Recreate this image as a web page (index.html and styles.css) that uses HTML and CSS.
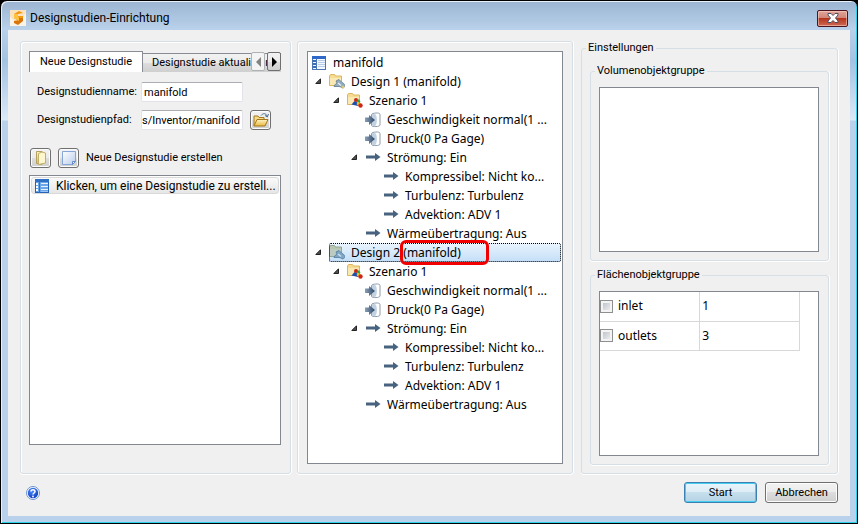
FILE: index.html
```
<!DOCTYPE html>
<html lang="de">
<head>
    <meta charset="UTF-8">
    <title>Designstudien-Einrichtung</title>
    <link rel="stylesheet" href="styles.css">
</head>
<body>
<svg class="defs" aria-hidden="true">
    <defs>
        <linearGradient id="gold" x1="0" y1="0" x2="0" y2="1">
            <stop offset="0" stop-color="#fdf3c4"/>
            <stop offset="1" stop-color="#e9b93f"/>
        </linearGradient>
        <linearGradient id="steel" x1="0" y1="0" x2="1" y2="0">
            <stop offset="0" stop-color="#8aa0b8"/>
            <stop offset="1" stop-color="#2d4766"/>
        </linearGradient>
        <linearGradient id="paper" x1="0" y1="0" x2="1" y2="1">
            <stop offset="0" stop-color="#fff"/>
            <stop offset="1" stop-color="#b9cdec"/>
        </linearGradient>
        <radialGradient id="ball" cx=".4" cy=".3" r=".8">
            <stop offset="0" stop-color="#4c8bff"/>
            <stop offset="1" stop-color="#0836b8"/>
        </radialGradient>
    </defs>
    <symbol id="toggle" viewBox="0 0 6 6">
        <path d="M5.500 .8v4.700H.8z" fill="#505050" stroke="#222"/>
    </symbol>
    <symbol id="study" viewBox="0 0 16 16">
        <rect x="1.500" y="1.500" width="13" height="13" fill="#f4f8ff" stroke="#4a75b5"/>
        <path d="M1 1h14v3H1z" fill="#2f68c8"/>
        <path d="M2 5h3v2H2zM2 8h3v2H2zM2 11h3v2H2z" fill="#3c6eb8"/>
        <path d="M5.500 4v11" stroke="#4a75b5"/>
        <path d="M7 5.500h7M7 7.500h7M7 9.500h7M7 11.500h7" stroke="#b8cbe6"/>
    </symbol>
    <symbol id="study-blue" viewBox="0 0 16 16">
        <rect x="1.500" y="1.500" width="13" height="13" fill="#6aa6e8" stroke="#2463b5"/>
        <path d="M1 1h14v3H1zM5 4h1v11H5z" fill="#2f6fc4"/>
        <path d="M2 5h2v2H2zM2 8h2v2H2zM2 11h2v2H2z" fill="#fff"/>
        <path d="M7 5.500h7M7 8.500h7M7 11.500h7" stroke="#e8f2ff"/>
        <path d="M7 13.500h7" stroke="#9cc3f2"/>
    </symbol>
    <symbol id="design" viewBox="0 0 16 16">
        <path d="M.5 2L1.500.5h4l1 1.500h6v9.500H.5z" fill="#f6dc92" stroke="#deb55e"/>
        <path d="M1 4h11v7H1z" fill="#fbe9b4"/>
        <path d="M5 12.500c0-2 2-2 3-3.500l-1-2 3-1.500 3 3c2 .5 3 2.500 2.500 4-1 2-2.500 1.500-3.500.5l-2-.5z" fill="#93adc0" stroke="#60798e" stroke-width=".8"/>
        <path d="M9 9l3 2.500" stroke="#e3edf3" stroke-width="1.500"/>
        <circle cx="14" cy="13" r="1.500" fill="#d9c877"/>
    </symbol>
    <symbol id="design-sel" viewBox="0 0 16 16">
        <path d="M.5 2L1.500.5h4l1 1.500h6v9.500H.5z" fill="#b9c6ae" stroke="#94a698"/>
        <path d="M1 4h11v7H1z" fill="#bccbc2"/>
        <path d="M5 12.500c0-2 2-2 3-3.500l-1-2 3-1.500 3 3c2 .5 3 2.500 2.500 4-1 2-2.500 1.500-3.500.5l-2-.5z" fill="#7fa6c5" stroke="#4f7ba0" stroke-width=".8"/>
        <path d="M9 9l3 2.500" stroke="#c9def0" stroke-width="1.500"/>
    </symbol>
    <symbol id="scenario" viewBox="0 0 16 16">
        <path d="M.5 2L1.500.5h4l1 1.500h6v9.500H.5z" fill="#f6dc92" stroke="#deb55e"/>
        <path d="M1 4h11v7H1z" fill="#fbe9b4"/>
        <path d="M4.500 11.500L7.500 8l3 1.500.5 3.500z" fill="#1b4fae"/>
        <path d="M10 8l2-2 1.500 3-2 1.500z" fill="#36a13c"/>
        <path d="M9.500 11l2-2 2.500 2-1.500 2.500z" fill="#f2cd1c"/>
        <circle cx="9" cy="7" r="2" fill="#c9281c"/>
        <circle cx="13.500" cy="12.500" r="2.200" fill="#cf2418"/>
    </symbol>
    <symbol id="inflow" viewBox="0 0 16 16">
        <path d="M6.500 2.500C7 1 15 0 15 2.500v10.500c0 2-8 2-8.500.5z" fill="#fff" stroke="#8d9cab"/>
        <path d="M10 2c2.500 1 2.500 11 0 12H7V2z" fill="#c3d2e2"/>
        <path d="M0 5.500h4V3l6 5-6 5v-3H0z" fill="url(#steel)"/>
    </symbol>
    <symbol id="arrow" viewBox="0 0 16 16">
        <path d="M1 5.500h9V3l5.500 4L10 11V8.500H1z" fill="#48637f"/>
    </symbol>
</svg>

<div class="window">
    <header class="titlebar">
        <svg class="app-icon" viewBox="0 0 16 16">
            <rect width="16" height="16" fill="#f9e2bd"/>
            <path d="M0 16V7l5 4 6-1 5-7v13z" fill="#fbf3e6"/>
            <path d="M13 3L9 1 4 4v4l5 3V8h4V6H8V4z" fill="#f5960f"/>
            <path d="M9 8h4v3l-5 4-4-2v-2l5-1z" fill="#d9740a"/>
            <path d="M4 4l4 0v2l1 2v3L4 8z" fill="#fdc23e"/>
        </svg>
        <h1 class="title">Designstudien-Einrichtung</h1>
        <button class="close" type="button" aria-label="Schließen">
            <svg viewBox="0 0 12 10"><path d="M1 .5h3l2 2 2-2h3v1.500L8.500 5 11 8v1.500H8l-2-2-2 2H1V8l2.500-3L1 2z" fill="#fff" stroke="#4a4f63"/></svg>
        </button>
    </header>

    <main class="client">
        <div class="panels">
            <section class="panel panel-study">
                <div class="tabs" role="tablist">
                    <button class="tab active" type="button" role="tab" aria-selected="true">Neue Designstudie</button>
                    <button class="tab" type="button" role="tab" aria-selected="false">Designstudie aktualisieren</button>
                    <div class="tab-scroll">
                        <button type="button" disabled aria-label="Zurück"><svg viewBox="0 0 5 10"><path d="M5 0v10L0 5z"/></svg></button>
                        <button type="button" aria-label="Weiter"><svg viewBox="0 0 5 10"><path d="M0 0v10l5-5z"/></svg></button>
                    </div>
                </div>
                <div class="form">
                    <label for="name">Designstudienname:</label>
                    <input id="name" type="text" value="manifold">
                    <label for="path">Designstudienpfad:</label>
                    <input id="path" class="path" type="text" value="s/Inventor/manifold">
                    <button class="tool" type="button" aria-label="Durchsuchen">
                        <svg viewBox="0 0 16 16">
                            <path d="M1 14V4h4l1 1.500h5V8" fill="#f5dc86" stroke="#a5781d"/>
                            <path d="M1 14l3-6.500h11L12 14z" fill="url(#gold)" stroke="#a5781d"/>
                            <path d="M8 3.500c2-2.500 5-2.500 6 .5M12 3.500l2.300 1.500L15.500 2" fill="none" stroke="#4c7098"/>
                        </svg>
                    </button>
                </div>
                <div class="create">
                    <button class="tool" type="button" aria-label="Neu">
                        <svg viewBox="0 0 16 16">
                            <path d="M3.500 1.500H9v13l-5.500-1z" fill="url(#gold)" stroke="#b3a15c"/>
                            <path d="M5.500 3.500L9 2l3.500 1v10l-7 1.500z" fill="#fdf6cf" stroke="#c2b06a"/>
                        </svg>
                    </button>
                    <button class="tool" type="button" aria-label="Kopieren">
                        <svg viewBox="0 0 16 16">
                            <path d="M1.500 1.500h13v10l-3 3h-10z" fill="url(#paper)" stroke="#86a5d8"/>
                            <path d="M14.500 11.500h-3v3z" fill="#fff" stroke="#6389c9"/>
                        </svg>
                    </button>
                    <span>Neue Designstudie erstellen</span>
                </div>
                <ul class="box study-list">
                    <li><svg class="icon"><use href="#study-blue"/></svg>Klicken, um eine Designstudie zu erstell...</li>
                </ul>
            </section>

            <section class="panel panel-tree">
                <div class="box tree">
                    <div class="row"><span class="item"><svg class="icon"><use href="#study"/></svg>manifold</span></div>
                    <ul>
                        <li>
                            <div class="row"><svg class="toggle"><use href="#toggle"/></svg><span class="item"><svg class="icon"><use href="#design"/></svg>Design 1 (manifold)</span></div>
                            <ul>
                                <li>
                                    <div class="row"><svg class="toggle"><use href="#toggle"/></svg><span class="item"><svg class="icon"><use href="#scenario"/></svg>Szenario 1</span></div>
                                    <ul>
                                        <li class="row leaf"><span class="item"><svg class="icon"><use href="#inflow"/></svg>Geschwindigkeit normal(1 ...</span></li>
                                        <li class="row leaf"><span class="item"><svg class="icon"><use href="#inflow"/></svg>Druck(0 Pa Gage)</span></li>
                                        <li>
                                            <div class="row"><svg class="toggle"><use href="#toggle"/></svg><span class="item"><svg class="icon"><use href="#arrow"/></svg>Strömung: Ein</span></div>
                                            <ul>
                                                <li class="row leaf"><span class="item"><svg class="icon"><use href="#arrow"/></svg>Kompressibel: Nicht ko...</span></li>
                                                <li class="row leaf"><span class="item"><svg class="icon"><use href="#arrow"/></svg>Turbulenz: Turbulenz</span></li>
                                                <li class="row leaf"><span class="item"><svg class="icon"><use href="#arrow"/></svg>Advektion: ADV 1</span></li>
                                            </ul>
                                        </li>
                                        <li class="row leaf"><span class="item"><svg class="icon"><use href="#arrow"/></svg>Wärmeübertragung: Aus</span></li>
                                    </ul>
                                </li>
                            </ul>
                        </li>
                        <li>
                            <div class="row"><svg class="toggle"><use href="#toggle"/></svg><span class="item selected"><svg class="icon"><use href="#design-sel"/></svg><span>Design 2 <span class="marked">(manifold)</span></span></span></div>
                            <ul>
                                <li>
                                    <div class="row"><svg class="toggle"><use href="#toggle"/></svg><span class="item"><svg class="icon"><use href="#scenario"/></svg>Szenario 1</span></div>
                                    <ul>
                                        <li class="row leaf"><span class="item"><svg class="icon"><use href="#inflow"/></svg>Geschwindigkeit normal(1 ...</span></li>
                                        <li class="row leaf"><span class="item"><svg class="icon"><use href="#inflow"/></svg>Druck(0 Pa Gage)</span></li>
                                        <li>
                                            <div class="row"><svg class="toggle"><use href="#toggle"/></svg><span class="item"><svg class="icon"><use href="#arrow"/></svg>Strömung: Ein</span></div>
                                            <ul>
                                                <li class="row leaf"><span class="item"><svg class="icon"><use href="#arrow"/></svg>Kompressibel: Nicht ko...</span></li>
                                                <li class="row leaf"><span class="item"><svg class="icon"><use href="#arrow"/></svg>Turbulenz: Turbulenz</span></li>
                                                <li class="row leaf"><span class="item"><svg class="icon"><use href="#arrow"/></svg>Advektion: ADV 1</span></li>
                                            </ul>
                                        </li>
                                        <li class="row leaf"><span class="item"><svg class="icon"><use href="#arrow"/></svg>Wärmeübertragung: Aus</span></li>
                                    </ul>
                                </li>
                            </ul>
                        </li>
                    </ul>
                </div>
            </section>

            <fieldset class="panel panel-settings">
                <legend>Einstellungen</legend>
                <fieldset class="panel group">
                    <legend>Volumenobjektgruppe</legend>
                    <div class="box"></div>
                </fieldset>
                <fieldset class="panel group">
                    <legend>Flächenobjektgruppe</legend>
                    <div class="box">
                        <table class="faces">
                            <tr>
                                <td><label><input type="checkbox">inlet</label></td>
                                <td>1</td>
                            </tr>
                            <tr>
                                <td><label><input type="checkbox">outlets</label></td>
                                <td>3</td>
                            </tr>
                        </table>
                    </div>
                </fieldset>
            </fieldset>
        </div>

        <footer class="footer">
            <button class="help" type="button" aria-label="Hilfe">
                <svg viewBox="0 0 14 14">
                    <circle cx="7" cy="7" r="6.500" fill="#fff" stroke="#6b93cf"/>
                    <circle cx="7" cy="7" r="5.200" fill="url(#ball)"/>
                    <path d="M5 5.500c0-2.500 4-2.500 4 0C9 7 7 7 7 8.500" fill="none" stroke="#fff" stroke-width="1.500"/>
                    <circle cx="7" cy="10.500" r=".9" fill="#fff"/>
                </svg>
            </button>
            <button class="btn default" type="button">Start</button>
            <button class="btn" type="button">Abbrechen</button>
        </footer>
    </main>
</div>
</body>
</html>
```
FILE: styles.css
```
* {
    box-sizing: border-box;
}

body {
    margin: 0;
    background: #000;
    color: #000;
    font: 11px/14px Roboto, "Liberation Sans", sans-serif;
}

button, input {
    margin: 0;
    padding: 0;
    color: inherit;
    font: inherit;
}

ul {
    margin: 0;
    padding: 0;
    list-style: none;
}

.defs {
    position: absolute;
    width: 0;
    height: 0;
}

/* window frame */
.window {
    display: flex;
    flex-direction: column;
    min-height: 100vh;
    padding: 0 6px 7px;
    border: 1px solid #000;
    border-radius: 7px 7px 0 0;
    background: linear-gradient(#9ab4d1, #b9d1ea 28px, #a3c2e2 60px, #dce9f7 119px, #b9d1ea 120px);
    box-shadow: inset 1px 1px #e8f1fa, inset -1px -1px #2cd3ea;
}

.titlebar {
    display: flex;
    align-items: center;
    height: 29px;
    padding: 5px 3px 0;
}

.app-icon {
    width: 16px;
    height: 16px;
}

.title {
    flex: 1;
    margin: 0 0 0 4px;
    font-size: 12px;
    font-weight: normal;
}

.close {
    display: flex;
    align-items: center;
    justify-content: center;
    width: 31px;
    height: 17px;
    border: 1px solid #4a1420;
    border-radius: 2px;
    background: linear-gradient(#e2a498, #d08376 50%, #b5351c 50%, #cf6a55);
    box-shadow: inset 0 0 0 1px rgba(255, 220, 210, .5);
}

.close svg {
    width: 12px;
    height: 10px;
}

.client {
    display: flex;
    flex: 1;
    flex-direction: column;
    margin: 0 1px;
    padding: 11px 12px 13px;
    background: #f0f0f0;
}

/* three columns */
.panels {
    display: grid;
    flex: 1;
    grid-template-columns: 271fr 276fr 259fr;
    gap: 6px;
}

.panel {
    display: flex;
    flex-direction: column;
    min-width: 0;
    margin: 0;
    padding: 9px 9px 8px 8px;
    border: 1px solid #d5dfe5;
    border-radius: 3px;
    box-shadow: inset 1px 1px #fff, 0 1px #fff, 1px 0 #fff;
}

.box {
    flex: 1;
    border: 1px solid #828790;
    background: #fff;
}

/* left column */
.panel-study {
    padding-bottom: 28px;
}

.tabs {
    position: relative;
    display: flex;
    align-items: flex-end;
    height: 21px;
    overflow: hidden;
}

.tab {
    flex: none;
    height: 19px;
    padding: 0 9px;
    border: 1px solid #898c95;
    border-left: 0;
    border-bottom: 0;
    background: linear-gradient(#f2f2f2, #ebebeb 50%, #ddd 50%, #cfcfcf);
}

.tab.active {
    height: 21px;
    padding: 0 10px;
    border-left: 1px solid #898c95;
    background: #fff;
}

.tab-scroll {
    position: absolute;
    right: 0;
    bottom: 1px;
    display: flex;
    gap: 2px;
}

.tab-scroll button {
    display: flex;
    align-items: center;
    justify-content: center;
    width: 14px;
    height: 19px;
    border: 1px solid #707070;
    border-radius: 2px;
    background: linear-gradient(#f2f2f2, #ebebeb 50%, #ddd 50%, #cfcfcf);
}

.tab-scroll button:disabled {
    border-color: #adb2b5;
    background: #f4f4f4;
    fill: #838383;
}

.tab-scroll svg {
    width: 5px;
    height: 10px;
}

.form {
    display: grid;
    grid-template-columns: 97px 102px 21px;
    grid-auto-rows: 20px;
    gap: 8px 7px;
    align-items: center;
    padding: 10px 8px 0;
}

.form input {
    width: 100%;
    height: 20px;
    padding: 0 2px;
    border: 1px solid #e2e3ea;
    border-top-color: #abadb3;
    border-radius: 2px;
    background: #fff;
}

.form .path {
    padding: 0;
}

.form label {
    grid-column: 1;
}

.tool {
    display: flex;
    align-items: center;
    justify-content: center;
    width: 21px;
    height: 20px;
    border: 1px solid #707070;
    border-radius: 3px;
    background: linear-gradient(#f2f2f2, #ebebeb 50%, #ddd 50%, #cfcfcf);
    box-shadow: inset 0 0 0 1px #fcfcfc;
}

.tool svg {
    width: 16px;
    height: 16px;
}

.create {
    display: flex;
    gap: 7px;
    align-items: center;
    padding: 18px 1px 7px;
}

.study-list {
    padding: 1px;
    font-size: 12px;
}

.study-list li {
    display: flex;
    gap: 6px;
    align-items: center;
    height: 17px;
    padding: 0 2px;
    border: 1px solid #d9d9d9;
    border-radius: 3px;
    background: linear-gradient(#fafafa, #e6e6e6);
    white-space: nowrap;
}

.icon {
    flex: none;
    width: 16px;
    height: 16px;
}

/* tree */
.tree {
    padding: 1px 1px 0 3px;
    font-family: "Noto Sans", "Open Sans", sans-serif;
    font-size: 12px;
}

.panel-tree {
    padding: 9px;
}

.tree ul ul {
    padding-left: 18px;
}

.row {
    display: flex;
    align-items: center;
    height: 19px;
}

.leaf {
    padding-left: 18px;
}

.toggle {
    flex: none;
    width: 6px;
    height: 6px;
    margin: 0 8px 2px 4px;
}

.item {
    display: flex;
    flex: 1;
    gap: 6px;
    align-items: center;
    height: 19px;
    white-space: nowrap;
}

.selected {
    border-radius: 2px;
    outline: 1px dotted #000;
    outline-offset: -1px;
    background: linear-gradient(#eaf4fd, #c3def8);
}

.marked {
    position: relative;
}

.marked::after {
    content: "";
    position: absolute;
    top: -4px;
    right: -28px;
    bottom: -4px;
    left: -3px;
    border: 3px solid #f00000;
    border-radius: 6px;
}

/* right column */
legend {
    margin-left: -4px;
    padding: 0 2px;
}

.panel-settings {
    gap: 7px;
    margin-left: 2px;
    padding-right: 8px;
    box-shadow: 0 1px #fff, 1px 0 #fff;
}

.group {
    flex: 1;
    box-shadow: 0 1px #fff, 1px 0 #fff;
}

.faces {
    width: 200px;
    border-collapse: collapse;
    table-layout: fixed;
    font-family: "Noto Sans", "Open Sans", sans-serif;
    font-size: 12px;
}

.faces td {
    height: 29px;
    padding: 0 2px;
    border: 1px solid #d8d8d8;
}

.faces td:first-child {
    padding: 0;
    border-left: 0;
}

.faces tr:first-child td {
    border-top: 0;
}

.faces label {
    display: flex;
    gap: 5px;
    align-items: center;
}

.faces input {
    appearance: none;
    width: 13px;
    height: 13px;
    border: 1px solid #8e8f8f;
    background: linear-gradient(135deg, #b4bbc4, #f6f6f6);
    box-shadow: inset 0 0 0 2px #f4f4f4;
}

/* buttons */
.footer {
    display: flex;
    gap: 8px;
    align-items: center;
    padding-top: 8px;
}

.help {
    width: 14px;
    height: 14px;
    margin: 0 auto 0 6px;
    border: 0;
    background: none;
}

.help svg {
    display: block;
}

.btn {
    width: 73px;
    height: 21px;
    border: 1px solid #707070;
    border-radius: 3px;
    background: linear-gradient(#f2f2f2, #ebebeb 50%, #ddd 50%, #cfcfcf);
    box-shadow: inset 0 0 0 1px #fcfcfc;
}

.btn.default {
    border-color: #3c7fb1;
    background: linear-gradient(#eaf4fa, #dcecf5 50%, #c6dfed 50%, #b5d3e4);
    box-shadow: inset 0 0 0 1px #48cdf2;
}
```
